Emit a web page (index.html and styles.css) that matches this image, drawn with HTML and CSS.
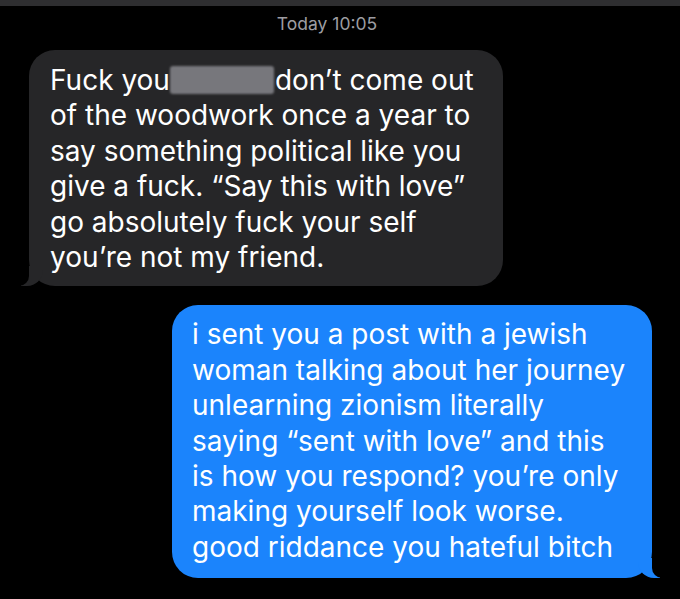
FILE: index.html
```html
<!DOCTYPE html>
<html lang="en">
<head>
    <meta charset="UTF-8">
    <meta name="viewport" content="width=device-width, initial-scale=1.0">
    <title>Messages</title>
    <link rel="stylesheet" href="styles.css">
</head>
<body>

<div class="topbar"></div>

<div class="thread">
    <div class="stamp">Today 10:05</div>

    <div class="bubble received">
        Fuck you<span class="redacted"></span>don’t come out<br>
        of the woodwork once a year to<br>
        say something political like you<br>
        give a fuck. “Say this with love”<br>
        go absolutely fuck your self<br>
        you’re not my friend.
    </div>

    <div class="bubble sent">
        i sent you a post with a jewish<br>
        woman talking about her journey<br>
        unlearning zionism literally<br>
        saying “sent with love” and this<br>
        is how you respond? you’re only<br>
        making yourself look worse.<br>
        good riddance you hateful bitch
    </div>
</div>

</body>
</html>
```

FILE: styles.css
```css
body {
    margin: 0;
    background: #000;
    color: #fff;
    font-family: Inter, "Noto Sans", sans-serif;
    height: 599px;
    overflow: hidden;
}

.topbar {
    height: 6px;
    background: #2e2e30;
}

.thread {
    display: flex;
    flex-direction: column;
}

.stamp {
    text-align: center;
    padding-right: 26px;
    margin-top: 8px;
    font-size: 17.5px;
    line-height: 20px;
    color: #9d9da2;
}

.bubble {
    position: relative;
    font-size: 28px;
    line-height: 35.4px;
    border-radius: 26px;
    box-sizing: border-box;
}

.received {
    align-self: flex-start;
    margin-left: 29px;
    margin-top: 16px;
    width: 474px;
    padding: 13px 16px 11px 21px;
    background: #262628;
}

.sent {
    align-self: flex-end;
    margin-right: 28px;
    margin-top: 19px;
    width: 480px;
    padding: 12px 18px 13px 20px;
    background: #1b84fc;
}

/* little tails at the bottom corners */
.received::before {
    content: "";
    position: absolute;
    bottom: 0;
    left: -8px;
    width: 22px;
    height: 20px;
    background: #262628;
    border-bottom-right-radius: 16px;
}

.received::after {
    content: "";
    position: absolute;
    bottom: 0;
    left: -11px;
    width: 11px;
    height: 20px;
    background: #000;
    border-bottom-right-radius: 10px;
}

.sent::before {
    content: "";
    position: absolute;
    bottom: 0;
    right: -8px;
    width: 22px;
    height: 20px;
    background: #1b84fc;
    border-bottom-left-radius: 16px;
}

.sent::after {
    content: "";
    position: absolute;
    bottom: 0;
    right: -11px;
    width: 11px;
    height: 20px;
    background: #000;
    border-bottom-left-radius: 10px;
}

.redacted {
    display: inline-block;
    width: 104px;
    height: 28px;
    margin: 0 1px 0 0;
    vertical-align: -4px;
    background: #77777c;
    border-radius: 3px;
    filter: blur(1px);
}
```
